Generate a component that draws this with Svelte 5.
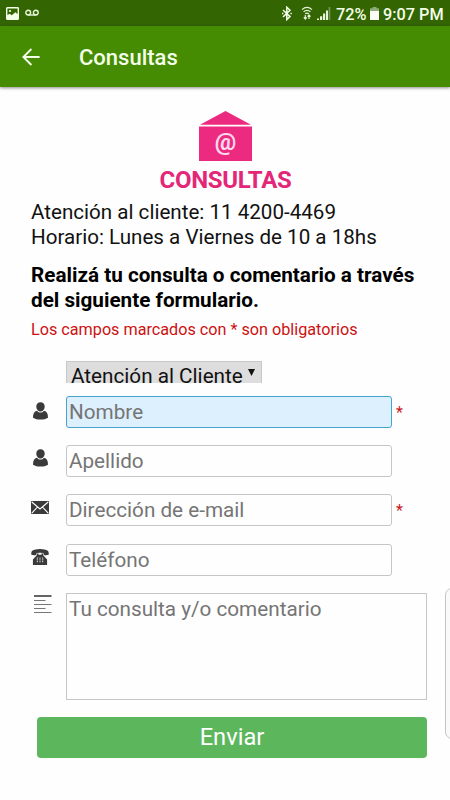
<script>
  let department = 'Atención al Cliente';

  let fields = [
    { id: 'nombre', label: 'Nombre', icon: 'user', required: true, active: true, value: '' },
    { id: 'apellido', label: 'Apellido', icon: 'user', required: false, active: false, value: '' },
    { id: 'email', label: 'Dirección de e-mail', icon: 'mail', required: true, active: false, value: '' },
    { id: 'telefono', label: 'Teléfono', icon: 'phone', required: false, active: false, value: '' }
  ];

  let message = '';
  let sent = false;

  function sendForm() {
    sent = true;
  }
</script>

<div class="screen">
  <div class="status-bar">
    <div class="status-left">
      <svg width="13" height="13" viewBox="0 0 13 13">
        <rect x="0.7" y="0.7" width="11.6" height="11.6" rx="0.6" fill="none" stroke="#f3ffe9" stroke-width="1.4" />
        <path d="M1 10V8.2l2.6-1.5 2.2 1.5 3.5-3L12 7.3V12H1z" fill="#f3ffe9" />
        <circle cx="4" cy="4" r="1.1" fill="#f3ffe9" />
      </svg>
      <svg class="voicemail" width="14" height="8" viewBox="0 0 14 8" fill="none" stroke="#e6f5d8" stroke-width="1.4">
        <circle cx="3.2" cy="3.6" r="2.4" />
        <circle cx="10.8" cy="3.6" r="2.4" />
        <path d="M3.2 6h7.6" />
      </svg>
    </div>
    <div class="status-right">
      <svg width="10" height="15" viewBox="0 0 10 15" fill="none" stroke="#f3ffe9" stroke-width="1.5">
        <path d="M1 4l7 6.6L4.8 13.6V1.2L8 4.2 1 11" />
        <path d="M0 7.4h1.4M8.4 7.4h1.4" />
      </svg>
      <svg class="wifi" width="12" height="14" viewBox="0 0 12 14" fill="none" stroke="#e6f5d8" stroke-width="1.2">
        <path d="M1 3.6q5-4.6 10 0M2.6 5.8q3.4-3 6.8 0M4.2 7.8q1.8-1.4 3.6 0" />
        <path d="M4.3 9v4M2.8 11.4l1.5 1.6 1.4-1.6M8 13V9M6.6 10.6L8 9l1.500 1.600" />
      </svg>
      <svg class="signal" width="14" height="13" viewBox="0 0 14 13">
        <path d="M0 11.5h2V13H0zM3 9.3h2.200V13H3zM6 6.500h2.200V13H6zM9 3.400h2V13H9z" fill="#e6f5d8" />
        <path d="M11.6 0h1.7v13h-1.7z" fill="#71975a" />
      </svg>
      <span class="percent">72%</span>
      <svg class="battery" width="9" height="13" viewBox="0 0 9 13">
        <path d="M2.5 0h4v1.2H9V5H0V1.2h2.5z" fill="#8dac78" />
        <path d="M0 4h9v9H0z" fill="#fbfff7" />
      </svg>
      <span class="clock">9:07 PM</span>
    </div>
  </div>

  <header>
    <button class="back" aria-label="Volver">
      <svg width="18" height="18" viewBox="0 0 18 18" fill="none" stroke="#f3ffe9" stroke-width="1.9">
        <path d="M17.6 9H1.5M9.4 1L1.4 9l8 8" />
      </svg>
    </button>
    <h1>Consultas</h1>
  </header>

  <main>
    <div class="logo">
      <svg width="53" height="50" viewBox="0 0 53 50">
        <path d="M1 13.8L26.5 0 52 13.8z" fill="#ec2a80" />
        <path d="M0 15.6h53V50H0z" fill="#ec2a80" />
        <text x="26.5" y="39" text-anchor="middle">@</text>
      </svg>
      <h2>CONSULTAS</h2>
    </div>

    <p class="info">Atención al cliente: 11 4200-4469</p>
    <p class="info hours">Horario: Lunes a Viernes de 10 a 18hs</p>
    <p class="intro">Realizá tu consulta o comentario a través<br />del siguiente formulario.</p>
    <p class="note">Los campos marcados con * son obligatorios</p>

    <form on:submit|preventDefault={sendForm}>
      <button type="button" class="select">
        <span>{department}</span>
        <svg width="7" height="7" viewBox="0 0 7 7"><path d="M0 0h7L3.5 7z" fill="#111" /></svg>
      </button>

      {#each fields as field (field.id)}
        <div class="row">
          <div class="icon {field.id}">
            {#if field.icon === 'user'}
              <svg width="15" height="18" viewBox="0 0 15 18" fill="#3a3a3a">
                <path d="M7.5 0.2c2.6 0 4.2 1.7 4.2 4.2 0 2.7-1.8 5-4.2 5s-4.200-2.300-4.200-5c0-2.500 1.600-4.200 4.200-4.200z" />
                <path d="M4 8.8C5 10.100 6.200 10.600 7.500 10.600s2.500-.5 3.500-1.800c2.900.8 4 3 4 7-2 1.300-4.500 1.800-7.500 1.800S2 17.100 0 15.800c0-4 1.100-6.200 4-7z" />
              </svg>
            {:else if field.icon === 'mail'}
              <svg width="18" height="13" viewBox="0 0 18 13">
                <rect width="18" height="13" rx="0.8" fill="#3a3a3a" />
                <path d="M0.8 1L9 8l8.2-7M0.8 12.2L6.5 6M17.2 12.2L11.5 6" fill="none" stroke="#fff" stroke-width="1.1" />
              </svg>
            {:else}
              <svg width="18" height="16" viewBox="0 0 18 16">
                <path d="M3.5 0.8Q9-.6 14.5.8q3.2.8 3.2 3.200v1.800q-2.200.8-4.800.2l-.5-2q-3.400-.7-6.800 0l-.5 2q-2.600.6-4.800-.2V4Q.3 1.600 3.500.8z" fill="#3a3a3a" />
                <path d="M5.8 4.400h1.700v1.300h3V4.400h1.700v1.800l3.900 4.400V16H1.900v-5.400l3.900-4.400z" fill="#3a3a3a" />
                <path d="M6.4 8.5v4.800M9 8.5v4.800M11.6 8.5v4.800" stroke="#c4c4c4" stroke-width="1.2" stroke-dasharray="1.2 .6" />
              </svg>
            {/if}
          </div>
          <input class:active={field.active} type="text" bind:value={field.value} placeholder={field.label} aria-label={field.label} />
          {#if field.required}
            <span class="star">*</span>
          {/if}
        </div>
      {/each}

      <div class="row message">
        <div class="icon lines">
          <svg width="18" height="19" viewBox="0 0 18 19">
            <path d="M0 1h17.5" stroke="#111" stroke-width="1.3" />
            <path d="M0 5.5h11.5M0 9.5h17.5M0 13.5h11.5M0 17.5h17.5" stroke="#777" stroke-width="1" />
          </svg>
        </div>
        <textarea bind:value={message} placeholder="Tu consulta y/o comentario" aria-label="Consulta"></textarea>
      </div>

      <button type="submit" class="submit" disabled={sent}>Enviar</button>
    </form>
  </main>

  <!-- Edge handle of the side panel -->
  <div class="edge-panel"></div>
</div>

<style>
  :global(body) {
    margin: 0;
    background: #fefefe;
  }

  .screen {
    position: relative;
    width: 450px;
    height: 800px;
    overflow: hidden;
    background: #fefefe;
    font-family: Roboto, sans-serif;
    color: #111;
  }

  .status-bar {
    display: flex;
    justify-content: space-between;
    box-sizing: border-box;
    height: 26px;
    padding: 0 7px 0 6px;
    background: #336503;
    color: #f3ffe9;
  }

  .status-left,
  .status-right {
    display: flex;
    align-items: center;
  }

  .voicemail {
    margin-left: 6px;
  }

  .wifi {
    margin-left: 9px;
  }

  .signal {
    margin-left: 4px;
  }

  .percent,
  .clock {
    padding-top: 2px;
    font-size: 16.3px;
    font-weight: 500;
    white-space: nowrap;
  }

  .percent {
    width: 30px;
    margin-left: 5px;
  }

  .battery {
    margin-left: 4px;
  }

  .clock {
    width: 60px;
    margin-left: 4px;
  }

  header {
    display: flex;
    align-items: center;
    box-sizing: border-box;
    height: 61px;
    padding-left: 22px;
    background: #458c02;
    box-shadow: 0 1px 3px rgba(0, 0, 0, 0.45);
  }

  .back {
    display: flex;
    padding: 0;
    border: none;
    background: none;
  }

  h1 {
    margin: 2px 0 0 39px;
    color: #f3ffe9;
    font-size: 22px;
    font-weight: 500;
    line-height: 26px;
  }

  main {
    padding: 24px 23px 0 31px;
  }

  .logo {
    display: flex;
    flex-direction: column;
    align-items: center;
    width: 389px;
  }

  .logo text {
    fill: #ffd9ec;
    font-size: 24px;
    font-weight: 700;
  }

  h2 {
    margin: 5px 0 0;
    color: #e42679;
    font-size: 24px;
    font-weight: 700;
    letter-spacing: -0.3px;
    line-height: 28px;
  }

  p {
    margin: 0;
    white-space: nowrap;
  }

  .info {
    margin-top: 6px;
    color: #111;
    font-size: 20.6px;
    line-height: 25px;
  }

  .hours {
    margin-top: 0;
  }

  .intro {
    margin-top: 13px;
    color: #000;
    font-size: 20.7px;
    font-weight: 700;
    line-height: 25px;
  }

  .note {
    margin-top: 7px;
    color: #cc1111;
    font-size: 16.2px;
    line-height: 20px;
  }

  form {
    display: flex;
    flex-direction: column;
    padding-top: 21px;
  }

  .select {
    display: flex;
    box-sizing: border-box;
    width: 196px;
    height: 22px;
    margin: 0 0 13px 35px;
    padding: 0 0 0 4px;
    overflow: hidden;
    border: 1px solid #c8c8c8;
    border-bottom: none;
    background: #dddddd;
    color: #111;
    font-family: inherit;
    font-size: 20.7px;
    line-height: 28px;
    text-align: left;
    white-space: nowrap;
  }

  .select span {
    width: 177px;
  }

  .select svg {
    margin-top: 7px;
  }

  .row {
    display: flex;
    height: 32px;
    margin-bottom: 17.2px;
  }

  .icon {
    width: 35px;
    padding-top: 6px;
  }

  .icon svg {
    display: block;
  }

  .nombre,
  .apellido {
    box-sizing: border-box;
    padding-left: 2px;
  }

  .apellido {
    padding-top: 4px;
  }

  .email {
    padding-top: 7px;
  }

  .telefono {
    padding-top: 5px;
  }

  .lines {
    box-sizing: border-box;
    padding: 2px 0 0 3px;
  }

  input,
  textarea {
    box-sizing: border-box;
    width: 326px;
    padding: 0 2px;
    border: 1px solid #c6c6c6;
    border-radius: 3px;
    background: #fefefe;
    font-family: inherit;
    font-size: 20.7px;
    outline: none;
  }

  input::placeholder,
  textarea::placeholder {
    color: #757575;
    opacity: 1;
  }

  input.active {
    border-color: #46a3cf;
    background: #dcf0fd;
  }

  .star {
    margin: 6px 0 0 4px;
    color: #cc1a1a;
    font-size: 16px;
    line-height: 22px;
  }

  .message {
    height: 107px;
    margin-bottom: 17.5px;
  }

  textarea {
    width: 361px;
    padding-top: 3px;
    border-radius: 0;
    line-height: 24px;
    resize: none;
  }

  .submit {
    width: 390px;
    height: 41px;
    margin-left: 6px;
    padding: 0 0 1px;
    border: none;
    border-radius: 4px;
    background: #5cb75c;
    color: #fff;
    font-family: inherit;
    font-size: 23.7px;
  }

  .edge-panel {
    position: absolute;
    top: 588px;
    right: -15px;
    box-sizing: border-box;
    width: 20px;
    height: 151px;
    border: 1px solid #c4c4c4;
    border-radius: 7px;
    background: #fafafa;
  }
</style>
